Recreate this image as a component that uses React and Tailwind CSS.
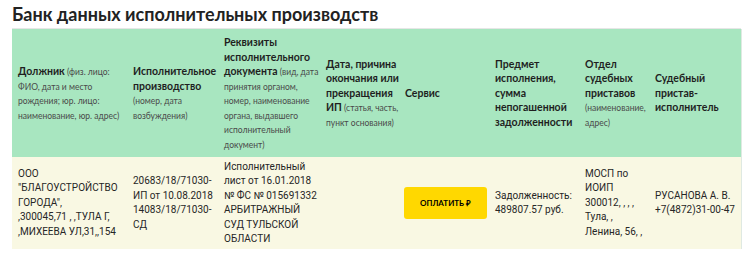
import React from 'react';

const headers = [
  { title: 'Должник', note: '(физ. лицо: ФИО, дата и место рождения; юр. лицо: наименование, юр. адрес)' },
  { title: 'Исполнительное производство', note: '(номер, дата возбуждения)' },
  { title: 'Реквизиты исполнительного документа', note: '(вид, дата принятия органом, номер, наименование органа, выдавшего исполнительный документ)' },
  { title: 'Дата, причина окончания или прекращения ИП', note: '(статья, часть, пункт основания)' },
  { title: 'Сервис' },
  { title: 'Предмет исполнения, сумма непогашенной задолженности' },
  { title: 'Отдел судебных приставов', note: '(наименование, адрес)' },
  { title: 'Судебный пристав-исполнитель' },
];

const widths = ['w-[115px]', 'w-[91px]', 'w-[102px]', 'w-[79px]', 'w-[90px]', 'w-[90px]', 'w-[70px]', 'w-[92px]'];

export default function App() {
  return (
    <div className="w-[750px] h-[266px] bg-white overflow-hidden">
      <div className="pl-3 pr-[9px]">
        <h1 className="font-['Lato',sans-serif] font-bold text-[18px] leading-[28px] text-[#222] border-b border-[#e6e6e6] h-[29px]">
          Банк данных исполнительных производств
        </h1>
        <table className="table-fixed border-collapse w-[729px] font-['Lato',sans-serif] border-r border-[#dfe9e2]">
          <colgroup>
            {widths.map((w, i) => (
              <col key={i} className={w} />
            ))}
          </colgroup>
          <thead>
            <tr className="bg-[#a8e6c0] h-[128px]">
              {headers.map((h, i) => (
                <th key={i} className="text-left align-middle font-normal pl-[6px] pr-0 py-[5px] text-[10.5px] leading-[14.5px] text-[#1f1f1f]">
                  <span className="font-bold">{h.title}</span>
                  {h.note && <span className="text-[8.5px] leading-none text-[#4a4a4a]"> {h.note}</span>}
                </th>
              ))}
            </tr>
          </thead>
          <tbody className="font-['Roboto',sans-serif]">
            <tr className="bg-[#f9f8e3] h-[92px] text-[10px] leading-[14.5px] text-[#262626]">
              <td className="align-middle pl-[6px] pr-0 py-0">
                ООО "БЛАГОУСТРОЙСТВО ГОРОДА",
                <br />
                ,300045,71 , ,ТУЛА Г,
                <br />
                ,МИХЕЕВА УЛ,31,,154
              </td>
              <td className="align-middle pl-[6px] pr-0 py-0">
                20683/18/71030-ИП от 10.08.2018 14083/18/71030-СД
              </td>
              <td className="align-middle pl-[6px] pr-0 py-0">
                Исполнительный лист от 16.01.2018 № ФС № 015691332 АРБИТРАЖНЫЙ СУД ТУЛЬСКОЙ ОБЛАСТИ
              </td>
              <td className="align-middle pl-[6px] pr-0 py-0"></td>
              <td className="align-middle pl-[5px] pr-0 py-0">
                <button className="w-[83px] h-[32px] rounded-[3px] bg-[#ffd800] text-black text-[8px] font-bold font-['Lato',sans-serif] flex items-center justify-center">
                  ОПЛАТИТЬ ₽
                </button>
              </td>
              <td className="align-middle pl-[6px] pr-0 py-0">
                Задолженность: 489807.57 руб.
              </td>
              <td className="align-middle pl-[6px] pr-0 py-0">
                МОСП по ИОИП 300012, , , , Тула, , Ленина, 56, ,
              </td>
              <td className="align-middle pl-[6px] pr-0 py-0">
                РУСАНОВА А. В. +7(4872)31-00-47
              </td>
            </tr>
          </tbody>
        </table>
      </div>
    </div>
  );
}
